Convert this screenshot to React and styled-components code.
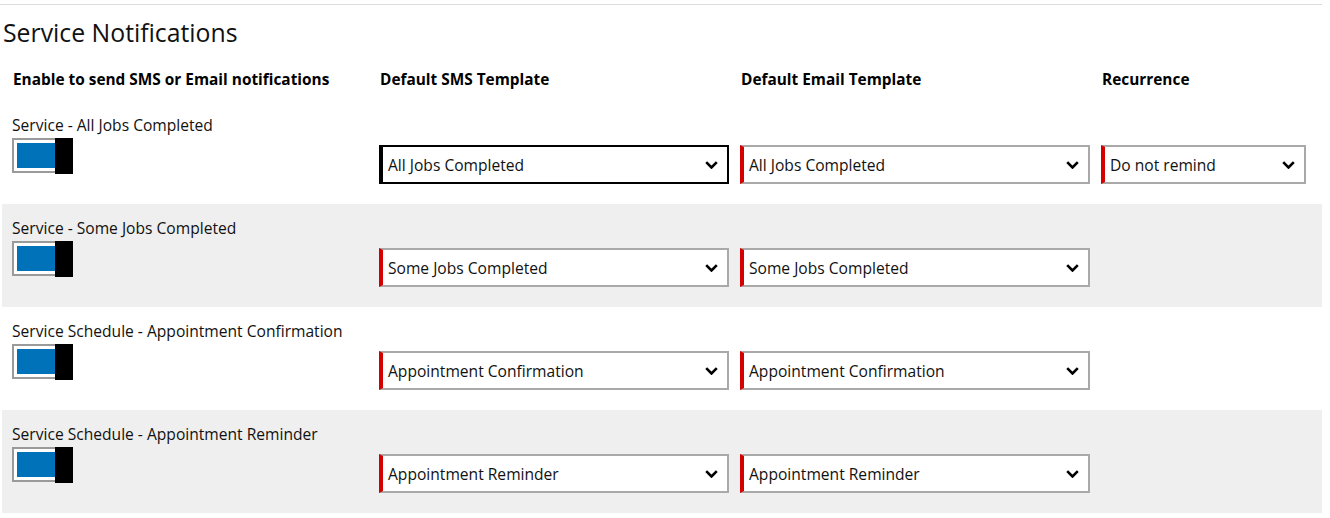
import React from "react";
import styled, { createGlobalStyle } from "styled-components";

const Global = createGlobalStyle`
  html, body { margin: 0; padding: 0; background: #fff; }
  body { font-family: "Open Sans", "Noto Sans", sans-serif; color: #111; }
`;

const Page = styled.div`
  width: 1322px;
`;

const Divider = styled.div`
  margin-top: 4px;
  height: 1px;
  background: #dddddd;
`;

const Title = styled.h1`
  margin: 10px 0 0 3px;
  font-size: 24.8px;
  line-height: 34px;
  font-weight: 400;
  color: #111;
`;

const Grid = styled.div`
  display: grid;
  grid-template-columns: 367px 361px 361px 1fr;
  padding: 0 16px 0 10px;
`;

const HeaderRow = styled(Grid)`
  margin-top: 21px;
  margin-bottom: 11px;
  margin-left: 2px;
`;

const HeaderCell = styled.div`
  font-size: 15.4px;
  line-height: 20px;
  font-weight: 700;
  color: #000;
  padding-left: 1px;
  white-space: nowrap;
`;

const Row = styled(Grid)`
  height: 103px;
  box-sizing: border-box;
  margin-left: 2px;
  background: ${(p) => (p.$shaded ? "#efefef" : "transparent")};
`;

const ToggleCell = styled.div`
  padding-top: 14px;
`;

const Label = styled.div`
  font-size: 15.6px;
  line-height: 20px;
  color: #111;
  white-space: nowrap;
`;

const Toggle = styled.div`
  position: relative;
  margin-top: 3px;
  width: 61px;
  height: 36px;
`;

const Track = styled.div`
  width: 46px;
  height: 35px;
  box-sizing: border-box;
  border: 2px solid #9a9a9a;
  background: #fff;
  padding: 3px 0 3px 3px;
`;

const Fill = styled.div`
  width: 100%;
  height: 100%;
  background: #0072b9;
`;

const Thumb = styled.div`
  position: absolute;
  top: 0;
  left: 43px;
  width: 18px;
  height: 36px;
  background: #000;
`;

const SelectCell = styled.div`
  padding-top: 44px;
`;

const SelectBox = styled.div`
  position: relative;
  width: ${(p) => p.$w}px;
  height: 39px;
  box-sizing: border-box;
  background: #fff;
  border: 2px solid ${(p) => (p.$focus ? "#000" : "#a9a9a9")};
  border-left: 4px solid ${(p) => (p.$focus ? "#000" : "#d40000")};
  display: flex;
  align-items: center;
  padding-left: 5px;
  font-size: 15.6px;
  color: #111;
  white-space: nowrap;
`;

const Chevron = styled.svg`
  position: absolute;
  right: 9px;
  top: 50%;
  margin-top: -4px;
`;

function Select({ value, width = 350, focus }) {
  return (
    <SelectBox $w={width} $focus={focus}>
      {value}
      <Chevron width="13" height="8" viewBox="0 0 13 8">
        <polyline points="1.2,1.2 6.5,6.5 11.8,1.2" fill="none" stroke="#000" strokeWidth="2.6" />
      </Chevron>
    </SelectBox>
  );
}

const rows = [
  { label: "Service - All Jobs Completed", sms: "All Jobs Completed", email: "All Jobs Completed", rec: "Do not remind", focus: true },
  { label: "Service - Some Jobs Completed", sms: "Some Jobs Completed", email: "Some Jobs Completed" },
  { label: "Service Schedule - Appointment Confirmation", sms: "Appointment Confirmation", email: "Appointment Confirmation" },
  { label: "Service Schedule - Appointment Reminder", sms: "Appointment Reminder", email: "Appointment Reminder" },
];

export default function App() {
  return (
    <Page>
      <Global />
      <Divider />
      <Title>Service Notifications</Title>
      <HeaderRow>
        <HeaderCell>Enable to send SMS or Email notifications</HeaderCell>
        <HeaderCell>Default SMS Template</HeaderCell>
        <HeaderCell>Default Email Template</HeaderCell>
        <HeaderCell>Recurrence</HeaderCell>
      </HeaderRow>
      {rows.map((r, i) => (
        <Row key={i} $shaded={i % 2 === 1}>
          <ToggleCell>
            <Label>{r.label}</Label>
            <Toggle>
              <Track><Fill /></Track>
              <Thumb />
            </Toggle>
          </ToggleCell>
          <SelectCell><Select value={r.sms} focus={r.focus} /></SelectCell>
          <SelectCell><Select value={r.email} /></SelectCell>
          <SelectCell>{r.rec && <Select value={r.rec} width={205} />}</SelectCell>
        </Row>
      ))}
    </Page>
  );
}
